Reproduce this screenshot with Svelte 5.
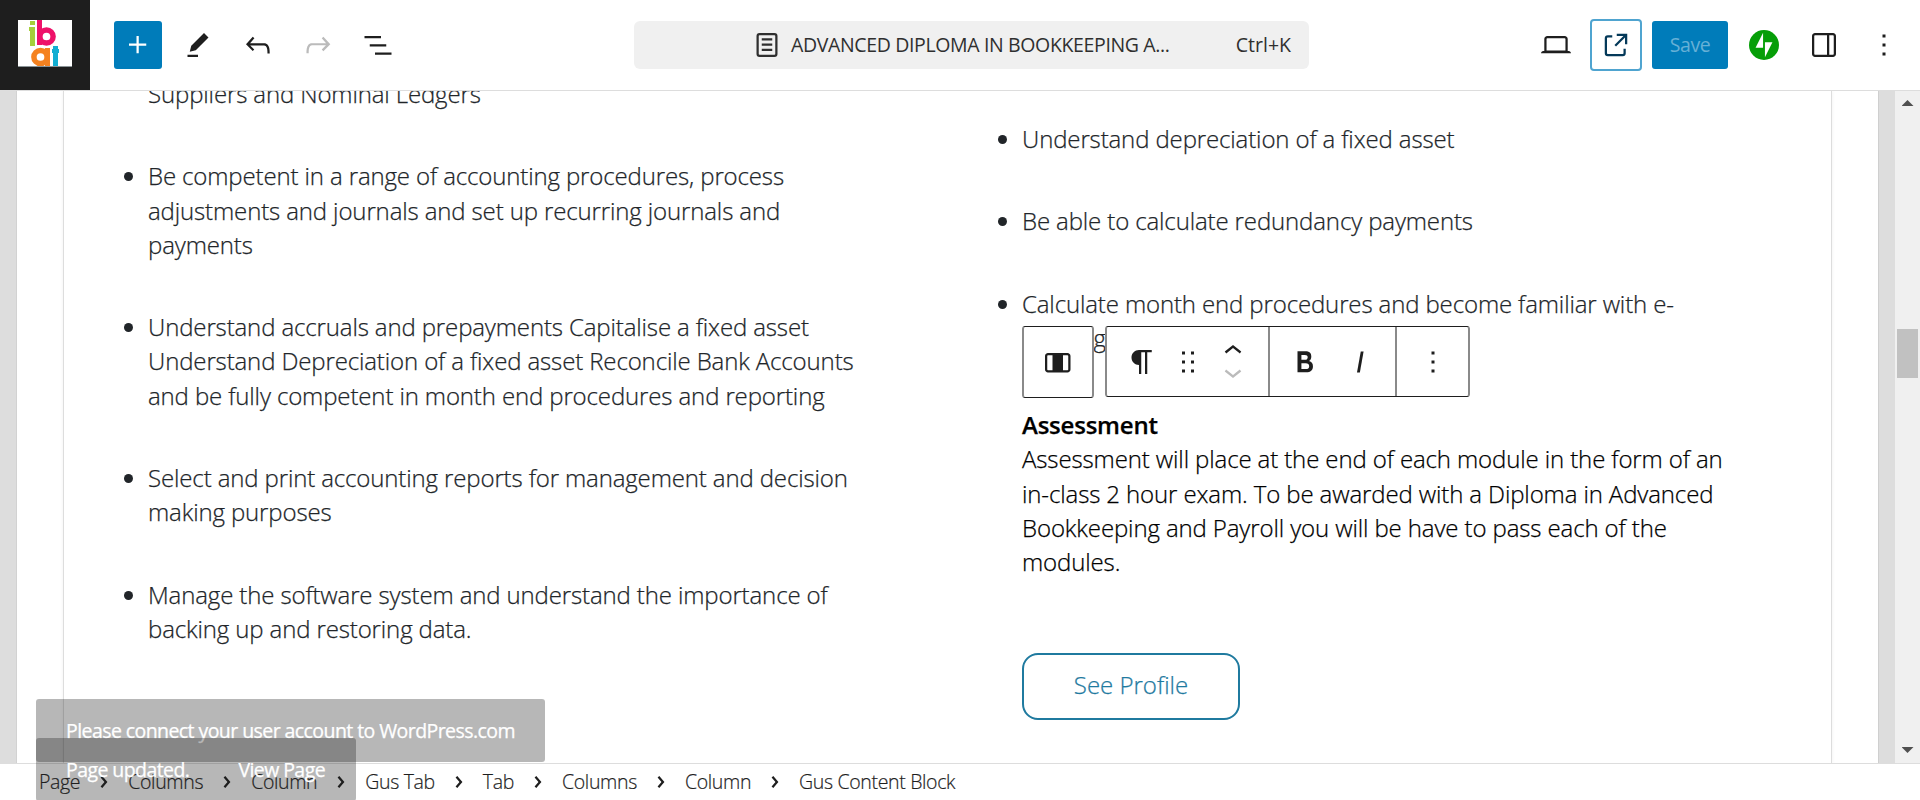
<script>
  const icons = {
    plus: 'M11 12.5V17.5H12.5V12.5H17.5V11H12.5V6H11V11H6V12.5H11Z',
    edit: 'm19 7-3-3-8.5 8.5-1 4 4-1L19 7Zm-7 11.5H5V20h7v-1.5Z',
    undo: 'M18.3 11.7c-.6-.6-1.4-.9-2.3-.9H6.7l2.9-3.3-1.1-1-4.5 5L8.5 16l1-1-2.7-2.7H16c.5 0 .9.2 1.3.5 1 1 1 3.4 1 4.5v.3h1.5v-.2c0-1.5 0-4.3-1.5-5.7z',
    redo: 'M15.6 6.5l-1.1 1 2.9 3.3H8c-.9 0-1.7.3-2.3.9-1.4 1.5-1.4 4.2-1.4 5.6v.2h1.5v-.3c0-1.1 0-3.5 1-4.5.3-.3.7-.5 1.3-.5h9.2L14.5 15l1.1 1.1 4.6-4.6-4.6-5z',
    listView: 'M3 6h11v1.5H3V6Zm3.5 5.5h11V13h-11v-1.5ZM21 17H10v1.5h11V17Z',
    page: 'M15.5 7.5h-7V9h7V7.5Zm-7 3.5h7v1.5h-7V11Zm7 3.5h-7V16h7v-1.5ZM17 4H7a2 2 0 0 0-2 2v12a2 2 0 0 0 2 2h10a2 2 0 0 0 2-2V6a2 2 0 0 0-2-2ZM7 5.5h10a.5.5 0 0 1 .5.5v12a.5.5 0 0 1-.5.5H7a.5.5 0 0 1-.5-.5V6a.5.5 0 0 1 .5-.5Z',
    desktop: 'M20.5 16h-.7V8c0-1.1-.9-2-2-2H6.2c-1.1 0-2 .9-2 2v8h-.7c-.8 0-1.5.7-1.5 1.5h20c0-.8-.7-1.5-1.5-1.5zM5.7 8c0-.3.2-.5.5-.5h11.6c.3 0 .5.2.5.5v7.6H5.7V8z',
    external: 'M19.5 4.5h-7V6h4.44l-5.97 5.97 1.06 1.06L18 7.06v4.44h1.5v-7Zm-13 1a2 2 0 0 0-2 2v10a2 2 0 0 0 2 2h10a2 2 0 0 0 2-2v-3H17v3a.5.5 0 0 1-.5.5h-10a.5.5 0 0 1-.5-.5v-10a.5.5 0 0 1 .5-.5h3V5.5h-3Z',
    sidebar: 'M18 4H6c-1.1 0-2 .9-2 2v12c0 1.1.9 2 2 2h12c1.1 0 2-.9 2-2V6c0-1.1-.9-2-2-2zm-4 14.5H6c-.3 0-.5-.2-.5-.5V6c0-.3.2-.5.5-.5h8v13zm4.5-.5c0 .3-.2.5-.5.5h-2.5v-13H18c.3 0 .5.2.5.5v12z',
    more: 'M13 19h-2v-2h2v2zm0-6h-2v-2h2v2zm0-6h-2V5h2v2z',
    column: 'M19 6H6c-1.1 0-2 .9-2 2v9c0 1.1.9 2 2 2h13c1.1 0 2-.9 2-2V8c0-1.1-.9-2-2-2zM6 17.5c-.3 0-.5-.2-.5-.5V8c0-.3.2-.5.5-.5h3v10H6zm13.5-.5c0 .3-.2.5-.5.5h-3v-10h3c.3 0 .5.2.5.5v9z',
    paragraph: 'm9.99609 14v-.2251l.00391.0001v6.225h1.5v-14.5h2.5v14.5h1.5v-14.5h3v-1.5h-8.50391c-2.76142 0-5 2.23858-5 5 0 2.7614 2.23858 5 5 5z',
    drag: 'M8 7h2V5H8v2zm0 6h2v-2H8v2zm0 6h2v-2H8v2zm6-14v2h2V5h-2zm0 8h2v-2h-2v2zm0 6h2v-2h-2v2z',
    up: 'M6.5 12.4L12 8l5.5 4.4-.9 1.2L12 10l-4.5 3.6-1-1.2z',
    down: 'M17.5 11.6L12 16l-5.5-4.4.9-1.2L12 14l4.5-3.6 1 1.2z',
    bold: 'M14.7 11.3c1-.6 1.5-1.6 1.5-3 0-2.3-1.3-3.4-4-3.4H7v14h5.8c1.4 0 2.5-.3 3.3-1 .8-.7 1.2-1.7 1.2-2.9.1-1.9-.8-3.1-2.6-3.7zm-5.1-4h2.3c.6 0 1.1.1 1.4.4.3.3.5.7.5 1.2s-.2 1-.5 1.2c-.3.3-.8.4-1.4.4H9.6V7.3zm4.6 9c-.4.3-1 .4-1.7.4H9.6v-3.9h2.9c.7 0 1.3.2 1.7.5.4.3.6.8.6 1.5s-.2 1.2-.6 1.5z',
    italic: 'M12.5 5L10 19h1.9l2.5-14z',
    chevron: 'M10.8622 8.04053L14.2805 12.0286L10.8622 16.0167L9.72327 15.0405L12.3049 12.0286L9.72327 9.01672L10.8622 8.04053Z'
  };

  const outcomes = [
    ['Suppliers and Nominal Ledgers'],
    ['Be competent in a range of accounting procedures, process', 'adjustments and journals and set up recurring journals and', 'payments'],
    ['Understand accruals and prepayments Capitalise a fixed asset', 'Understand Depreciation of a fixed asset Reconcile Bank Accounts', 'and be fully competent in month end procedures and reporting'],
    ['Select and print accounting reports for management and decision', 'making purposes'],
    ['Manage the software system and understand the importance of', 'backing up and restoring data.']
  ];
  const skills = [
    ['Understand depreciation of a fixed asset'],
    ['Be able to calculate redundancy payments'],
    ['Calculate month end procedures and become familiar with e-', 'banking']
  ];
  const assessment = [
    'Assessment will place at the end of each module in the form of an',
    'in-class 2 hour exam. To be awarded with a Diploma in Advanced',
    'Bookkeeping and Payroll you will be have to pass each of the',
    'modules.'
  ];
  const crumbs = ['Page', 'Columns', 'Column', 'Gus Tab', 'Tab', 'Columns', 'Column', 'Gus Content Block'];
</script>

{#snippet icon(name)}
  <svg class="icon" viewBox="0 0 24 24" fill-rule={name === 'page' ? 'evenodd' : 'nonzero'}><path d={icons[name]} /></svg>
{/snippet}

{#snippet list(items)}
  <ul>
    {#each items as lines}
      <li>{#each lines as line}<span class="line">{line}</span>{/each}</li>
    {/each}
  </ul>
{/snippet}

<div class="editor">
  <header>
    <div class="site">
      <svg class="logo" viewBox="0 0 54 47">
        <rect width="54" height="47" fill="#fff" />
        <g fill="#a5cf3a"><rect x="12" y="1" width="5" height="4" /><rect x="11" y="7" width="3" height="4" /><rect x="12" y="7" width="5" height="19" /></g>
        <rect x="19" y="0" width="5" height="25" fill="#ee1169" />
        <circle cx="28.500" cy="16.500" r="6.600" fill="none" stroke="#ee1169" stroke-width="5.500" />
        <circle cx="22.500" cy="37" r="6.600" fill="none" stroke="#f58220" stroke-width="5.500" />
        <rect x="27" y="28" width="5" height="18" fill="#f58220" />
        <g fill="#12aed2"><rect x="35" y="26" width="5" height="20" /><rect x="34" y="29" width="7" height="4" /></g>
        <rect y="46" width="54" height="1" fill="#8b9497" />
      </svg>
    </div>
    <div class="tools">
      <button class="primary">{@render icon('plus')}</button>
      <button>{@render icon('edit')}</button>
      <button>{@render icon('undo')}</button>
      <button class="off">{@render icon('redo')}</button>
      <button>{@render icon('listView')}</button>
    </div>
    <div class="command">
      {@render icon('page')}
      <span class="doc">ADVANCED DIPLOMA IN BOOKKEEPING A...</span>
      <span class="keys">Ctrl+K</span>
    </div>
    <div class="actions">
      <button>{@render icon('desktop')}</button>
      <button class="view">{@render icon('external')}</button>
      <button class="save">Save</button>
      <button class="jet">
        <svg viewBox="0 0 32 32"><circle cx="16" cy="16" r="16" fill="#069e08" /><path fill="#fff" d="M15 19H7l8-16zM17 29V13h8z" /></svg>
      </button>
      <button>{@render icon('sidebar')}</button>
      <button>{@render icon('more')}</button>
    </div>
  </header>

  <main>
    <div class="gutter left"></div>
    <div class="sheet">
      <div class="panel">
        <section class="first">{@render list(outcomes)}</section>
        <section class="second">
          {@render list(skills)}
          <div class="assessment">
            <strong>Assessment</strong>
            {#each assessment as line}<span class="line">{line}</span>{/each}
          </div>
          <a class="profile">See Profile</a>
          <div class="blockbar">
            <div class="group parent">{@render icon('column')}</div>
            <div class="group bar">
              <div class="seg move">
                {@render icon('paragraph')}
                {@render icon('drag')}
                <div class="mover">{@render icon('up')}<span class="dim">{@render icon('down')}</span></div>
              </div>
              <div class="seg format">{@render icon('bold')}{@render icon('italic')}</div>
              <div class="seg opts">{@render icon('more')}</div>
            </div>
          </div>
        </section>
      </div>
    </div>
    <div class="gutter right"></div>
    <div class="scroll">
      <i class="arrow top"></i>
      <i class="thumb"></i>
      <i class="arrow bottom"></i>
    </div>
  </main>

  <footer>
    {#each crumbs as crumb, i}
      {#if i > 0}<span class="sep">{@render icon('chevron')}</span>{/if}
      <span class="crumb">{crumb}</span>
    {/each}
  </footer>

  <div class="snack connect">Please connect your user account to WordPress.com</div>
  <div class="snack updated"><span>Page updated.</span><span>View Page</span></div>
</div>

<style>
  :global(body) { margin: 0; overflow: hidden; }
  .editor { position: relative; width: 1920px; height: 800px; display: flex; flex-direction: column; overflow: hidden; background: #fff; color: #1e1e1e; font: 19.500px/28px "Open Sans", "Noto Sans", sans-serif; white-space: nowrap; box-sizing: border-box; }
  .editor *, .editor { box-sizing: border-box; }
  .icon { width: 36px; height: 36px; fill: currentColor; display: block; flex: none; }
  button { border: 0; padding: 0; background: none; color: #1e1e1e; font: inherit; width: 48px; height: 48px; display: flex; align-items: center; justify-content: center; border-radius: 3px; flex: none; }

  header { height: 90px; display: flex; align-items: center; background: #fff; flex: none; }
  .site { width: 90px; height: 90px; background: #1e1e1e; padding: 20px 18px; flex: none; }
  .logo { width: 54px; height: 47px; display: block; }
  .tools { display: flex; gap: 12px; margin-left: 24px; width: 520px; }
  .primary { background: #007cba; color: #fff; }
  .off { color: #bbb; }
  .command { width: 675px; height: 48px; border-radius: 6px; background: #f0f0f0; display: flex; align-items: center; padding: 0 18px 0 115px; color: #2f2f2f; }
  .doc { margin-left: 6px; letter-spacing: -0.360px; }
  .keys { margin-left: auto; }
  .actions { margin-left: auto; display: flex; align-items: center; margin-right: 12px; gap: 12px; }
  .view { width: 52px; height: 52px; border: 2px solid #4fa4d0; border-radius: 4px; color: #043959; margin: 0 -2px; }
  .save { width: 76px; background: #007cba; color: #66b0d6; letter-spacing: -0.400px; }
  .jet svg { width: 30px; height: 30px; }

  main { height: 673px; display: flex; border-top: 1px solid #ddd; flex: none; overflow: hidden; }
  .gutter { width: 17px; background: #ddd; flex: none; }
  .gutter.left { border-right: 1px solid #d2d2d2; }
  .gutter.right { border-left: 1px solid #cfcfcf; }
  .sheet { width: 1861px; padding: 0 46px; flex: none; }
  .panel { width: 1769px; height: 673px; border: solid #ddd; border-width: 0 1px; display: flex; box-shadow: 0 0 4px rgba(0, 0, 0, .06); }
  .first { width: 874px; padding-left: 84px; color: #212529; flex: none; }
  .second { position: relative; padding-left: 84px; color: #212529; }
  ul { margin: 0; padding: 0; font-size: 24px; font-weight: 300; letter-spacing: -0.130px; line-height: 34.290px; -webkit-text-stroke: 0.250px currentColor; }
  .first ul { margin-top: -14px; }
  .second ul { margin-top: 31px; }
  li { margin-bottom: 48px; }
  .first li:first-child { list-style: none; }
  .second li:last-child { margin-bottom: 0; }
  .line { display: block; }
  .assessment { font-size: 24px; font-weight: 300; letter-spacing: -0.120px; line-height: 34.290px; color: #000; margin-top: 53px; -webkit-text-stroke: 0.250px currentColor; }
  .assessment strong { display: block; font-weight: 600; letter-spacing: -0.220px; }
  .profile { display: flex; align-items: center; justify-content: center; width: 218px; height: 67px; border: 2px solid #1f7a9f; border-radius: 16px; color: #1f7a9f; font-size: 24px; font-weight: 300; margin-top: 73.400px; padding-bottom: 4px; -webkit-text-stroke: 0.250px currentColor; }

  .blockbar { position: absolute; left: 84px; top: 235px; display: flex; gap: 11px; color: #1e1e1e; }
  .group { height: 72px; background: #fff; border: solid #1e1e1e; border-width: 1px 2px; border-left-color: #8a8a8a; border-right-color: #8a8a8a; border-radius: 3px; display: flex; align-items: center; }
  .parent { width: 72px; justify-content: center; padding-right: 2px; }
  .bar { width: 365px; height: 71px; }
  .seg { height: 69px; display: flex; align-items: center; }
  .move { width: 163px; border-right: 2px solid #8a8a8a; padding-left: 17px; }
  .move > :global(svg + svg) { margin-left: 10px; }
  .mover { margin-left: 9px; display: flex; flex-direction: column; }
  .mover .dim { color: #bbb; margin-top: -15px; }
  .format { width: 127px; border-right: 2px solid #8a8a8a; padding-left: 17px; gap: 19px; }
  .opts { width: 71px; justify-content: center; }

  .scroll { width: 25px; background: #f0f0f0; display: flex; flex-direction: column; align-items: center; flex: none; }
  .arrow { width: 12px; height: 6px; background: #505050; flex: none; }
  .top { margin-top: 9px; clip-path: polygon(50% 0, 100% 100%, 0 100%); }
  .thumb { width: 21px; height: 49px; background: #c1c1c1; margin-top: 223px; }
  .bottom { margin-top: auto; margin-bottom: 10px; clip-path: polygon(0 0, 100% 0, 50% 100%); }

  footer { height: 37px; border-top: 1px solid #ddd; display: flex; align-items: center; padding-left: 39px; background: #fff; flex: none; color: #1e1e1e; font-weight: 300; letter-spacing: -0.340px; -webkit-text-stroke: 0.200px currentColor; }
  .sep { width: 48px; display: flex; justify-content: center; color: #1e1e1e; }

  .snack { position: absolute; left: 36px; background: rgba(30, 30, 30, .32); border-radius: 3px; color: #fff; padding-left: 30px; display: flex; align-items: center; letter-spacing: -0.570px; -webkit-text-stroke: 0.250px currentColor; }
  .connect { top: 699px; width: 509px; height: 63px; }
  .updated { top: 738px; width: 320px; height: 63px; gap: 49px; }
</style>
